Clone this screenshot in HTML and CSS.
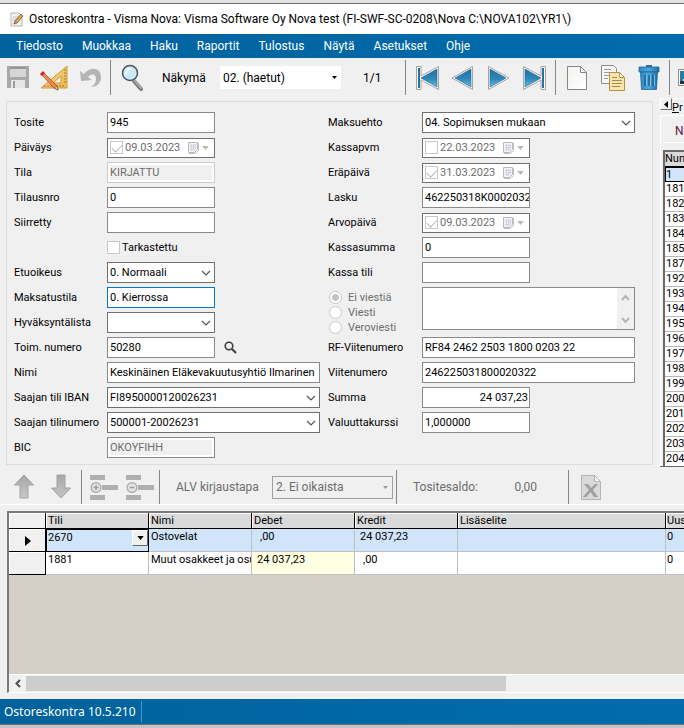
FILE: index.html
```html
<!DOCTYPE html>
<html lang="fi">
<head>
<meta charset="utf-8">
<title>Ostoreskontra</title>
<link rel="stylesheet" href="styles.css">
</head>
<body>
<svg class="defs" aria-hidden="true">
  <defs>
    <linearGradient id="blue" x1="0" y1="0" x2="0" y2="1"><stop offset="0" stop-color="#1f72a4"/><stop offset=".55" stop-color="#2f86b8"/><stop offset="1" stop-color="#6cc0e6"/></linearGradient>
    <linearGradient id="bin" x1="0" y1="0" x2="1" y2="0"><stop offset="0" stop-color="#2e8ac4"/><stop offset=".5" stop-color="#4aa8dc"/><stop offset="1" stop-color="#1f6fa8"/></linearGradient>
    <linearGradient id="paper" x1="0" y1="0" x2="1" y2="1"><stop offset="0" stop-color="#f2f2ee"/><stop offset="1" stop-color="#ffffff"/></linearGradient>
    <linearGradient id="gold" x1="0" y1="0" x2="1" y2="1"><stop offset="0" stop-color="#f5dc9c"/><stop offset="1" stop-color="#e8b64c"/></linearGradient>
    <linearGradient id="grey" x1="0" y1="0" x2="0" y2="1"><stop offset="0" stop-color="#a8a8a8"/><stop offset="1" stop-color="#c6c6c6"/></linearGradient>
  </defs>
  <symbol id="chevron" viewBox="0 0 10 6"><path d="M1 1l4 4 4-4" fill="none" stroke="#555" stroke-width="1.2"/></symbol>
  <symbol id="triangle" viewBox="0 0 5 3"><path d="M0 0h5L2.500 3z" fill="currentColor"/></symbol>
  <symbol id="calendar" viewBox="0 0 12 13"><path d="M1.500 1.500h9v7l-3 3h-6z" fill="#f3f3f7" stroke="#b9b9bf"/><path d="M3 4.500h6M3 6.500h6M3 8.500h5M4.500 3v7M6.500 3v7M8.500 3v5" stroke="#d0d0d8" stroke-width=".8"/><path d="M11.500 2v7.500l-3 3H2" fill="none" stroke="#c4bfc4"/></symbol>
</svg>

<div class="backdrop-top"></div>
<header class="titlebar">
  <svg width="14" height="15" viewBox="0 0 14 15"><path d="M1 1h8l3 3v10H1z" fill="#f2f2f0" stroke="#b5b5b5"/><path d="M3 5h5M3 7h4M3 9h3" stroke="#c4c8cc"/><path d="M4 12l1-3 6-7 2 2-6 7z" fill="#e2a34e" stroke="#6e5134" stroke-width=".8"/></svg>
  <h1>Ostoreskontra - Visma Nova: Visma Software Oy Nova test (FI-SWF-SC-0208\Nova C:\NOVA102\YR1\)</h1>
</header>

<nav class="menubar">
  <a href="#">Tiedosto</a><a href="#">Muokkaa</a><a href="#">Haku</a><a href="#">Raportit</a><a href="#">Tulostus</a><a href="#">Näytä</a><a href="#">Asetukset</a><a href="#">Ohje</a>
</nav>

<div class="toolbar">
  <div class="group files">
    <button aria-label="Tallenna" disabled><svg width="22" height="23" viewBox="0 0 22 23"><path d="M0 0h22v22H0z" fill="#a9a9a9"/><path d="M3 1h16v2H3z" fill="#969696"/><path d="M3 3h16v8H3z" fill="#d6d6d6"/><path d="M4 14h14v8H4z" fill="#e6e6e6"/><path d="M6 15h2v7H6z" fill="#9c9c9c"/></svg></button>
    <button aria-label="Suunnittele"><svg width="30" height="26" viewBox="0 0 30 26"><path d="M28 1v22H2z" fill="url(#gold)" stroke="#d79a35"/><path d="M22 11v7h-8z" fill="#efefef" stroke="#d79a35"/><path d="M6 22v-2M9 22v-2M12 22v-2M15 22v-2M18 22v-2M21 22v-2M24 22v-2M27 5h-2M27 8h-2M27 11h-2M27 14h-2M27 17h-2" stroke="#9a6d20" stroke-width=".8"/><path d="M2 9l2-2 14 14 1 4-4-2z" fill="#ee8a4c" stroke="#a34e26" stroke-width=".8"/><path d="M1 9l3-3 2 2-3 3z" fill="#d3242c"/><path d="M15 23l3-2 1 4z" fill="#f4dfbd" stroke="#5f4730" stroke-width=".6"/></svg></button>
    <button aria-label="Kumoa" disabled><svg width="24" height="24" viewBox="0 0 24 24"><path d="M1 5l1 10 11-1-4-3c4-4 8-3 8 2 0 4-2 6-5 8 6 0 10-4 10-10C22 1 11 0 5 8z" fill="#b4b4b4"/></svg></button>
  </div>
  <div class="group view">
    <button aria-label="Hae"><svg width="24" height="28" viewBox="0 0 24 28"><path d="M13 17l7 8" stroke="#777" stroke-width="4" stroke-linecap="round"/><path d="M13 16l7 8" stroke="#aaa" stroke-width="2" stroke-linecap="round"/><circle cx="9" cy="9" r="7.500" fill="#cde8f6" stroke="#4b555b" stroke-width="1.500"/><path d="M4 9c0-4 4-6 8-4-4 0-6 3-6 7z" fill="#f6fcff"/></svg></button>
    <label for="view">Näkymä</label>
    <span class="pick"><select id="view"><option>02. (haetut)</option></select><svg width="5" height="3"><use href="#triangle"/></svg></span>
    <span class="page">1/1</span>
  </div>
  <div class="group records">
    <button aria-label="Ensimmäinen"><svg width="26" height="26" viewBox="0 0 26 26"><path d="M24.500 1.500v23L7 15v9.500H2.500v-23H7V11z" fill="#fff" stroke="#a4a4a4"/><path d="M23 4v18L7 13z" fill="url(#blue)" stroke="#1d648e" stroke-width=".6"/><path d="M4 3h2v20H4z" fill="#27729f"/></svg></button>
    <button aria-label="Edellinen"><svg width="26" height="26" viewBox="0 0 26 26"><path d="M22.500 1.500v23L2 13z" fill="#fff" stroke="#a4a4a4"/><path d="M21 4v18L5 13z" fill="url(#blue)" stroke="#1d648e" stroke-width=".6"/></svg></button>
    <button aria-label="Seuraava"><svg width="26" height="26" viewBox="0 0 26 26"><path d="M2.500 1.500v23L23 13z" fill="#fff" stroke="#a4a4a4"/><path d="M4 4v18l16-9z" fill="url(#blue)" stroke="#1d648e" stroke-width=".6"/></svg></button>
    <button aria-label="Viimeinen"><svg width="26" height="26" viewBox="0 0 26 26"><path d="M1.500 1.500v23L19 15v9.500h4.500v-23H19V11z" fill="#fff" stroke="#a4a4a4"/><path d="M3 4v18l16-9z" fill="url(#blue)" stroke="#1d648e" stroke-width=".6"/><path d="M20 3h2v20h-2z" fill="#27729f"/></svg></button>
  </div>
  <div class="group documents">
    <button aria-label="Uusi"><svg width="22" height="26" viewBox="0 0 22 26"><path d="M1.500 1.500h13l6 6v17h-19z" fill="url(#paper)" stroke="#858585"/><path d="M14.500 1.500v6h6z" fill="#fff" stroke="#858585"/></svg></button>
    <button aria-label="Kopioi"><svg width="26" height="28" viewBox="0 0 26 28"><path d="M1.500 1.500h12l3 3v15h-15z" fill="#f7f7f5" stroke="#8a8a8a"/><path d="M4 5.500h7M4 8.500h9M4 11.500h5M4 14.500h4" stroke="#9a9a9a"/><path d="M9.500 8.500h10l5 5v13h-15z" fill="#f8e6b0" stroke="#b9923f"/><path d="M19.500 8.500v5h5z" fill="#fff" stroke="#b9923f"/><path d="M12 13.500h5M12 16.500h10M12 19.500h10M12 22.500h8" stroke="#a88b4a"/></svg></button>
    <button aria-label="Poista"><svg width="22" height="28" viewBox="0 0 22 28"><path d="M8 1h6v3H8z" fill="#2b6f9d"/><path d="M1 3h20v5H1z" fill="url(#bin)" stroke="#1f6594" stroke-width=".8"/><path d="M2.500 8h17l-1 17.500h-15z" fill="url(#bin)" stroke="#1f6594" stroke-width=".8"/><path d="M7 11v11M11 11v11M15 11v11" stroke="#1b5f90" stroke-width="1.500"/><path d="M8.500 11v11M12.500 11v11M16.500 11v11" stroke="#8dcbea" stroke-width=".8"/></svg></button>
  </div>
  <div class="group more">
    <button aria-label="Kuva"><svg width="22" height="22" viewBox="0 0 22 22"><path d="M1.500 2.500h19v16h-19z" fill="#fff" stroke="#8d8d8d"/><path d="M3 4h16v13H3z" fill="#2878a8"/><path d="M3 14h16v3H3z" fill="#16384e"/><path d="M6 12h10v2H6z" fill="#e7f2f8"/></svg></button>
  </div>
</div>

<main class="workspace">
  <form class="voucher">
    <div class="column">
      <div class="row"><label for="tosite">Tosite</label><input id="tosite" class="short" value="945"></div>
      <div class="row"><label for="paivays">Päiväys</label><span class="date"><input type="checkbox" checked disabled aria-label="Päiväys käytössä"><input id="paivays" value="09.03.2023" disabled><svg width="12" height="13"><use href="#calendar"/></svg><svg class="tri" width="7" height="4" viewBox="0 0 5 3"><use href="#triangle"/></svg></span></div>
      <div class="row"><label for="tila">Tila</label><input id="tila" class="short off pale" value="KIRJATTU" disabled></div>
      <div class="row"><label for="tilausnro">Tilausnro</label><input id="tilausnro" class="short" value="0"></div>
      <div class="row"><label for="siirretty">Siirretty</label><input id="siirretty" class="short"></div>
      <div class="row"><span></span><label class="tick"><input type="checkbox">Tarkastettu</label></div>
      <div class="row"><label for="etuoikeus">Etuoikeus</label><span class="combo short"><select id="etuoikeus"><option>0. Normaali</option></select><svg width="10" height="6"><use href="#chevron"/></svg></span></div>
      <div class="row"><label for="maksatustila">Maksatustila</label><input id="maksatustila" class="short current" value="0. Kierrossa"></div>
      <div class="row"><label for="lista">Hyväksyntälista</label><span class="combo short"><select id="lista"><option></option></select><svg width="10" height="6"><use href="#chevron"/></svg></span></div>
      <div class="row"><label for="toimnro">Toim. numero</label><span class="lookup"><input id="toimnro" class="short" value="50280"><button type="button" aria-label="Hae toimittaja"><svg width="13" height="13" viewBox="0 0 13 13"><circle cx="5" cy="5" r="3.800" fill="none" stroke="#3f3f3f" stroke-width="1.600"/><path d="M8 8l4 4" stroke="#3f3f3f" stroke-width="2.200"/></svg></button></span></div>
      <div class="row"><label for="nimi">Nimi</label><input id="nimi" class="long" value="Keskinäinen Eläkevakuutusyhtiö Ilmarinen"></div>
      <div class="row"><label for="iban">Saajan tili IBAN</label><span class="combo long"><select id="iban"><option>FI8950000120026231</option></select><svg width="10" height="6"><use href="#chevron"/></svg></span></div>
      <div class="row"><label for="tilinro">Saajan tilinumero</label><span class="combo long"><select id="tilinro"><option>500001-20026231</option></select><svg width="10" height="6"><use href="#chevron"/></svg></span></div>
      <div class="row"><label for="bic">BIC</label><input id="bic" class="short off" value="OKOYFIHH" disabled></div>
    </div>
    <div class="column">
      <div class="row"><label for="maksuehto">Maksuehto</label><span class="combo long"><select id="maksuehto"><option>04. Sopimuksen mukaan</option></select><svg width="10" height="6"><use href="#chevron"/></svg></span></div>
      <div class="row"><label for="kassapvm">Kassapvm</label><span class="date"><input type="checkbox" disabled aria-label="Kassapvm käytössä"><input id="kassapvm" value="22.03.2023" disabled><svg width="12" height="13"><use href="#calendar"/></svg><svg class="tri" width="7" height="4" viewBox="0 0 5 3"><use href="#triangle"/></svg></span></div>
      <div class="row"><label for="erapaiva">Eräpäivä</label><span class="date"><input type="checkbox" checked disabled aria-label="Eräpäivä käytössä"><input id="erapaiva" value="31.03.2023" disabled><svg width="12" height="13"><use href="#calendar"/></svg><svg class="tri" width="7" height="4" viewBox="0 0 5 3"><use href="#triangle"/></svg></span></div>
      <div class="row"><label for="lasku">Lasku</label><input id="lasku" class="short" value="462250318K0002032"></div>
      <div class="row"><label for="arvopaiva">Arvopäivä</label><span class="date"><input type="checkbox" checked disabled aria-label="Arvopäivä käytössä"><input id="arvopaiva" value="09.03.2023" disabled><svg width="12" height="13"><use href="#calendar"/></svg><svg class="tri" width="7" height="4" viewBox="0 0 5 3"><use href="#triangle"/></svg></span></div>
      <div class="row"><label for="kassasumma">Kassasumma</label><input id="kassasumma" class="short" value="0"></div>
      <div class="row"><label for="kassatili">Kassa tili</label><input id="kassatili" class="short"></div>
      <div class="row message">
        <div class="radios">
          <label><input type="radio" name="viesti" checked disabled>Ei viestiä</label>
          <label><input type="radio" name="viesti" disabled>Viesti</label>
          <label><input type="radio" name="viesti" disabled>Veroviesti</label>
        </div>
        <div class="memo long"><textarea aria-label="Viesti"></textarea><div class="scroll"><svg width="9" height="7" viewBox="0 0 9 7"><path d="M1 6l3.500-4L8 6" fill="none" stroke="#b4b4b4" stroke-width="2"/></svg><svg width="9" height="7" viewBox="0 0 9 7"><path d="M1 1l3.500 4L8 1" fill="none" stroke="#b4b4b4" stroke-width="2"/></svg></div></div>
      </div>
      <div class="row"><label for="rf">RF-Viitenumero</label><input id="rf" class="long" value="RF84 2462 2503 1800 0203 22"></div>
      <div class="row"><label for="viite">Viitenumero</label><input id="viite" class="long" value="246225031800020322"></div>
      <div class="row"><label for="summa">Summa</label><input id="summa" class="short number" value="24 037,23"></div>
      <div class="row"><label for="kurssi">Valuuttakurssi</label><input id="kurssi" class="short" value="1,000000"></div>
    </div>
  </form>

  <aside class="side">
    <div class="side-tabs"><button aria-label="Edellinen välilehti"><svg width="4" height="7" viewBox="0 0 4 7"><path d="M4 0v7L0 3.500z"/></svg></button><a href="#"><u>P</u>r</a></div>
    <div class="side-page">
      <div class="side-head">N</div>
      <table class="numbers">
        <thead><tr><th>Num</th></tr></thead>
        <tbody>
          <tr class="selected"><td>1</td></tr><tr><td>181</td></tr><tr><td>182</td></tr><tr><td>183</td></tr><tr><td>184</td></tr><tr><td>185</td></tr><tr><td>187</td></tr><tr><td>192</td></tr><tr><td>193</td></tr><tr><td>194</td></tr><tr><td>195</td></tr><tr><td>196</td></tr><tr><td>197</td></tr><tr><td>198</td></tr><tr><td>199</td></tr><tr><td>200</td></tr><tr><td>201</td></tr><tr><td>202</td></tr><tr><td>203</td></tr><tr><td>204</td></tr>
        </tbody>
      </table>
    </div>
  </aside>
</main>

<div class="toolbar rows-bar">
  <div class="group moves">
    <button aria-label="Siirrä ylös" disabled><svg width="22" height="26" viewBox="0 0 22 26"><path d="M11 1l9.500 10H15v13H7V11H1.500z" fill="url(#grey)" stroke="#a2a2a2"/></svg></button>
    <button aria-label="Siirrä alas" disabled><svg width="22" height="26" viewBox="0 0 22 26"><path d="M11 24l9.500-10H15V1H7v13H1.500z" fill="url(#grey)" stroke="#a2a2a2"/></svg></button>
  </div>
  <div class="group lines">
    <button aria-label="Lisää rivi" disabled><svg width="28" height="25" viewBox="0 0 28 25"><path d="M0 0h15v5H0zM0 20h15v5H0zM12 10h16v5H12z" fill="#b0b0b0"/><circle cx="6" cy="12.500" r="4.800" fill="#e4e4e4" stroke="#b0b0b0" stroke-width="1.500"/><path d="M6 10v5M3.500 12.500h5" stroke="#9e9e9e" stroke-width="1.500"/></svg></button>
    <button aria-label="Poista rivi" disabled><svg width="28" height="25" viewBox="0 0 28 25"><path d="M0 0h15v5H0zM0 20h15v5H0zM12 10h16v5H12z" fill="#b0b0b0"/><circle cx="6" cy="12.500" r="4.800" fill="#e4e4e4" stroke="#b0b0b0" stroke-width="1.500"/><path d="M3.500 12.500h5" stroke="#9e9e9e" stroke-width="1.500"/></svg></button>
  </div>
  <div class="group vat">
    <label for="alv">ALV kirjaustapa</label>
    <span class="pick"><select id="alv" disabled><option>2. Ei oikaista</option></select><svg width="5" height="3"><use href="#triangle"/></svg></span>
  </div>
  <div class="group balance"><span>Tositesaldo:</span><output>0,00</output></div>
  <div class="group export">
    <button aria-label="Vie Exceliin" disabled><svg width="20" height="25" viewBox="0 0 20 25"><path d="M.5.500h13l6 6v18H.5z" fill="#d9d9d9" stroke="#b4b4b4"/><path d="M13.500.500v6h6z" fill="#f5f5f5" stroke="#b4b4b4"/><path d="M3 9h4l3 4L14 9h3l-5 6 5 7h-4l-3.500-5-4 5H2l6-7z" fill="#a0a0a0"/></svg></button>
  </div>
</div>

<section class="grid">
  <div class="grid-body">
    <table class="entries">
      <colgroup><col class="c-mark"><col class="c-tili"><col class="c-mid"><col class="c-mid"><col class="c-mid"><col class="c-text"><col></colgroup>
      <thead><tr><th></th><th>Tili</th><th>Nimi</th><th>Debet</th><th>Kredit</th><th>Lisäselite</th><th>Uus</th></tr></thead>
      <tbody>
        <tr class="selected"><th><svg width="6" height="10" viewBox="0 0 6 10"><path d="M0 0l6 5-6 5z"/></svg></th><td class="active"><div class="picker"><span>2670</span><button aria-label="Valitse tili"><svg width="7" height="4" viewBox="0 0 5 3"><use href="#triangle"/></svg></button></div></td><td>Ostovelat</td><td class="amount zero">,00</td><td class="amount">24 037,23</td><td></td><td>0</td></tr>
        <tr><th></th><td>1881</td><td>Muut osakkeet ja osu</td><td class="amount tinted">24 037,23</td><td class="amount zero">,00</td><td></td><td>0</td></tr>
      </tbody>
    </table>
  </div>
  <div class="hscroll"><button aria-label="Vieritä vasemmalle"><svg width="6" height="9" viewBox="0 0 6 9"><path d="M5 1L1.500 4.500 5 8" fill="none" stroke="#505050" stroke-width="2"/></svg></button><div class="track"><div class="thumb"></div></div></div>
</section>

<footer class="statusbar"><span>Ostoreskontra 10.5.210</span></footer>
<div class="backdrop-bottom"></div>
</body>
</html>
```
FILE: styles.css
```css
* { box-sizing: border-box; }

body {
  margin: 0;
  min-height: 100vh;
  display: flex;
  flex-direction: column;
  overflow: hidden;
  background: #f0f0f0;
  color: #000;
  font: 11px/15px Roboto, sans-serif;
}

.defs { position: absolute; width: 0; height: 0; }
svg { display: block; flex: none; }
input, select, textarea, button { font: inherit; color: inherit; margin: 0; padding: 0; border: 0; border-radius: 0; }
input, select, textarea { background: #fff; min-width: 0; }
select { appearance: none; width: 100%; opacity: 1; }
button { background: none; display: flex; align-items: center; justify-content: center; }
table { border-collapse: separate; border-spacing: 0; }
a { color: inherit; text-decoration: none; }

/* Window chrome */
.backdrop-top { height: 4px; background: #e2e2e2; border-bottom: 1px solid #6e6e6e; }
.titlebar { display: flex; align-items: center; gap: 5px; height: 30px; padding-left: 10px; background: #fff; }
.titlebar h1 { margin: 0; font: 12px/16px Roboto, sans-serif; white-space: nowrap; }

.menubar {
  display: flex;
  align-items: center;
  gap: 19px;
  height: 24px;
  padding-left: 16px;
  background: linear-gradient(90deg, #00629c, #006cae);
  color: #fff;
  font: 12px/16px Roboto, sans-serif;
}

/* Toolbars */
.toolbar { display: flex; height: 40px; padding-top: 2px; overflow: hidden; font: 12px/16px Roboto, sans-serif; }
.group { display: flex; align-items: center; flex: none; height: 35px; border-right: 1px solid #858585; }
.files { width: 111px; padding-left: 7px; gap: 10px; }
.view { width: 295px; padding-left: 10px; }
.view label { margin-left: 17px; width: 58px; }
.view .pick { width: 121px; height: 23px; }
.page { margin-left: 22px; }
.records { width: 150px; padding-left: 8px; gap: 10px; }
.documents { width: 114px; padding-left: 10px; gap: 12px; }
.more { padding-left: 7px; border-right: 0; }

.pick, .combo { display: grid; align-items: center; }
.pick > *, .combo > * { grid-area: 1 / 1; }
.pick svg, .combo svg { justify-self: end; pointer-events: none; }
.pick select { height: 100%; padding-left: 3px; }
.pick svg { margin-right: 4px; }

/* Voucher form */
.workspace { display: flex; align-items: flex-start; gap: 7px; }
.voucher {
  flex: 1;
  display: flex;
  gap: 8px;
  margin: 3px 0 0 6px;
  padding: 10px 7px 6px;
  border: 1px solid #dcdcdc;
}
.column { display: flex; flex-direction: column; gap: 4px; }
.row { flex: none; display: grid; grid-template-columns: 93px auto; justify-content: start; align-items: center; height: 21px; white-space: nowrap; }
.column + .column .row { grid-template-columns: 94px auto; }
.row input:not([type]) { height: 21px; padding: 0 0 1px 2px; border: 1px solid #8a8a8a; }
.short, .row input.short { width: 108px; }
.long, .row input.long { width: 213px; }
.row input.current { border-color: #0078d7; }
.row input.number { padding-right: 1px; text-align: right; }
.row input.off { color: #6d6d6d; background: #f0f0f0; box-shadow: inset 0 0 0 2px #fff; }
.row input.pale { border-color: #ccc; }
.combo select { height: 21px; padding: 0 2px 1px; border: 1px solid #707070; }
.combo svg { margin-right: 4px; }
.lookup { display: flex; gap: 9px; }

.date { display: flex; align-items: center; width: 108px; height: 20px; padding-left: 2px; border: 1px solid #6f6f6f; background: #fff; color: #bbbaae; }
.row .date input:not([type]) { flex: 1; height: 18px; padding: 0 2px; border: 0; background: none; color: #6d6d6d; }
.date .tri { margin: 0 5px 0 3px; }

input[type="checkbox"], input[type="radio"] { appearance: none; flex: none; width: 13px; height: 13px; border: 1px solid #c8c8c8; background: #fff; }
input[type="checkbox"]:checked::before { content: ""; display: block; width: 9px; height: 5px; margin: 2px 0 0 1px; border: solid #b9b9b9; border-width: 0 0 1px 1px; transform: rotate(-45deg); }
input[type="radio"] { border-radius: 50%; }
input[type="radio"]:checked { background: radial-gradient(circle, #c4c4c4 3px, #fff 4px); }
.tick { display: flex; align-items: center; gap: 2px; }

.row.message { height: 46px; align-items: start; }
.radios { padding-top: 3px; }
.radios label { display: flex; align-items: center; gap: 6px; height: 15px; padding-left: 1px; color: #6d6d6d; }
.memo { display: flex; height: 43px; border: 1px solid #8a8a8a; background: #fff; }
.memo textarea { flex: 1; resize: none; overflow: hidden; }
.scroll { display: flex; flex-direction: column; justify-content: space-between; align-items: center; width: 17px; padding: 6px 0 5px; background: #f0f0f0; }

/* Side panel */
.side { flex: none; width: 24px; height: 369px; overflow: hidden; white-space: nowrap; border-bottom: 1px solid #696969; }
.side-tabs { display: flex; height: 17px; }
.side-tabs button { flex: none; width: 12px; height: 12px; border: 1px solid; border-color: #fff #696969 #696969 #fff; }
.side-tabs a { padding-top: 1px; border-top: 1px solid #fff; }
.side-page { border: solid #fff; border-width: 1px 0 0 1px; }
.side-head { height: 27px; margin-left: 2px; padding: 7px 0 0 12px; border-bottom: 1px solid #fff; color: #5a1440; font: 12px/16px Roboto, sans-serif; }
.numbers { width: 100%; margin: 7px 0 0 2px; border: solid #6a6a6a; border-width: 2px 0 0 2px; background: #fff; }
.numbers th, .numbers td { height: 15px; padding: 0 0 0 1px; font-weight: 400; text-align: left; line-height: 14px; border-bottom: 1px solid #b8b8b8; }
.numbers th { padding-left: 0; background: #dadada; border-bottom-color: #000; }
.numbers .selected td { height: 15px; line-height: 13px; background: #d0e5fa; border: 1px solid #000; padding-left: 0; }

/* Row toolbar */
.rows-bar { height: 38px; padding-top: 3px; border-bottom: 1px solid #fff; color: #6d6d6d; }
.rows-bar .group { height: 34px; }
.moves { width: 82px; padding-left: 13px; gap: 15px; }
.lines { width: 78px; padding-left: 8px; gap: 8px; }
.vat { width: 237px; padding-left: 16px; }
.vat label { width: 96px; white-space: nowrap; }
.vat .pick { width: 121px; height: 23px; border: 1px solid #a0a0a0; color: #999; }
.vat select { background: #f0f0f0; color: #6d6d6d; }
.balance { width: 172px; padding-left: 16px; }
.balance output { padding-right: 31px; text-align: right; flex: 1; }
.export { padding-left: 12px; border-right: 0; }

/* Entry grid */
.grid { flex: 1; display: flex; flex-direction: column; margin: 6px 0 6px 7px; border: solid; border-color: #7a7a7a #7a7a7a #fff; border-width: 2px 0 1px 2px; }
.grid-body { flex: 1; overflow: hidden; background: #d4d0c8; }
.entries { width: 100%; table-layout: fixed; }
.c-mark { width: 37px; }
.c-tili { width: 103px; }
.c-mid { width: 103px; }
.c-text { width: 208px; }
.entries th, .entries td { padding: 0 0 0 2px; overflow: hidden; white-space: nowrap; text-align: left; vertical-align: top; font-weight: 400; border: solid #c0c0c0; border-width: 0 1px 1px 0; }
.entries th { background: #dadada; border-color: #000; box-shadow: inset 1px 1px #fff; }
.entries thead th { height: 16px; line-height: 15px; }
.entries thead th:last-child, .entries td:last-child { padding-left: 1px; border-right: 0; }
.entries tbody th { height: 23px; padding: 7px 0 0 16px; background: #f0f0f0; }
.entries thead th:first-child { background: #f0f0f0; }
.entries td { background: #fff; }
.entries .selected td { background: #d0e5fa; }
.entries td.tinted { background: #ffffe1; }
.entries td.active { padding: 0; border: 1px solid #000; }
.entries td.amount { padding-left: 5px; }
.entries td.zero { padding-left: 8px; }
.picker { display: flex; justify-content: space-between; padding-left: 1px; }
.picker button { width: 16px; height: 16px; background: #f0f0f0; border: 1px solid; border-color: #fff #696969 #696969 #fff; }

.hscroll { display: flex; height: 18px; padding: 1px 0; background: #f0f0f0; border-top: 1px solid #fff; }
.hscroll button { width: 17px; }
.track { flex: 1; }
.thumb { width: 73%; height: 100%; background: #cdcdcd; }

/* Status bar */
.statusbar { height: 25px; display: flex; padding: 2px 0 2px 4px; background: linear-gradient(90deg, #00629c, #006cae); color: #fff; font: 12px/22px "Noto Sans", sans-serif; }
.statusbar span { width: 138px; border-right: 1px solid #4f94c0; white-space: nowrap; }
.backdrop-bottom { height: 4px; background: #c4c4c4; border-top: 1px solid #6e6e6e; }
```
